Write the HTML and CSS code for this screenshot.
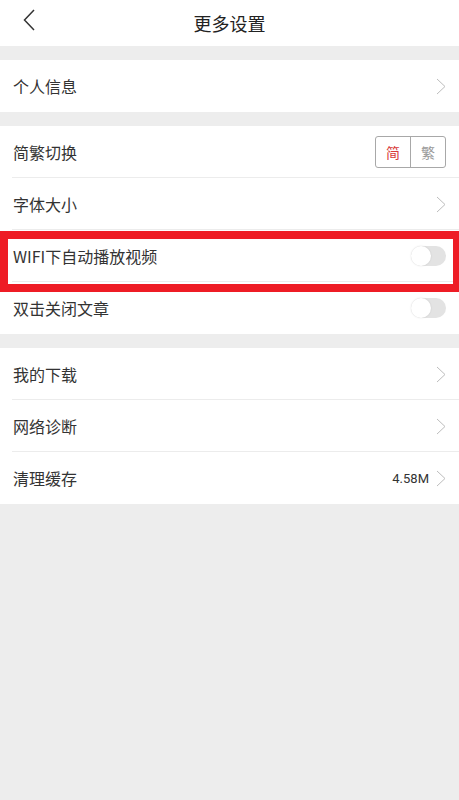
FILE: index.html
```html
<!DOCTYPE html>
<html lang="zh">
<head>
<meta charset="utf-8">
<title>更多设置</title>
<link rel="stylesheet" href="styles.css">
</head>
<body>
<div class="page">
  <header class="header">
    <span class="back">
      <svg width="14" height="22" viewBox="0 0 14 22"><polyline points="11,1 1.5,11 11,21" fill="none" stroke="#333" stroke-width="1.5"/></svg>
    </span>
    <h1 class="title">更多设置</h1>
  </header>

  <section class="group">
    <div class="row"><span class="label">个人信息</span><span class="right"><svg class="chev" width="10" height="17" viewBox="0 0 10 17"><polyline points="1,1 9,8.5 1,16" fill="none" stroke="#bdbdbd" stroke-width="1"/></svg></span></div>
  </section>

  <section class="group">
    <div class="row line"><span class="label">简繁切换</span>
      <span class="seg"><span class="seg-item active">简</span><span class="seg-item">繁</span></span>
    </div>
    <div class="row line"><span class="label">字体大小</span><span class="right"><svg class="chev" width="10" height="17" viewBox="0 0 10 17"><polyline points="1,1 9,8.5 1,16" fill="none" stroke="#bdbdbd" stroke-width="1"/></svg></span></div>
    <div class="row line"><span class="label">WIFI下自动播放视频</span><span class="toggle"><span class="knob"></span></span></div>
    <div class="row"><span class="label">双击关闭文章</span><span class="toggle"><span class="knob"></span></span></div>
  </section>

  <section class="group">
    <div class="row line"><span class="label">我的下载</span><span class="right"><svg class="chev" width="10" height="17" viewBox="0 0 10 17"><polyline points="1,1 9,8.5 1,16" fill="none" stroke="#bdbdbd" stroke-width="1"/></svg></span></div>
    <div class="row line"><span class="label">网络诊断</span><span class="right"><svg class="chev" width="10" height="17" viewBox="0 0 10 17"><polyline points="1,1 9,8.5 1,16" fill="none" stroke="#bdbdbd" stroke-width="1"/></svg></span></div>
    <div class="row"><span class="label">清理缓存</span><span class="right"><span class="value">4.58M</span><svg class="chev" width="10" height="17" viewBox="0 0 10 17"><polyline points="1,1 9,8.5 1,16" fill="none" stroke="#bdbdbd" stroke-width="1"/></svg></span></div>
  </section>

  <div class="highlight"></div>
</div>
</body>
</html>
```

FILE: styles.css
```css
html, body {
  margin: 0;
  padding: 0;
  background: #ededed;
}
body {
  font-family: "Noto Sans CJK SC", "Noto Sans", sans-serif;
  color: #333;
  width: 459px;
  height: 800px;
  overflow: hidden;
}
.page {
  position: relative;
  min-height: 800px;
}
.header {
  height: 46px;
  background: #fff;
  display: flex;
  align-items: center;
  justify-content: center;
  position: relative;
}
.back {
  position: absolute;
  left: 23px;
  top: 9px;
  display: flex;
}
.title {
  margin: 0;
  font-size: 18px;
  font-weight: 400;
  color: #222;
  line-height: 46px;
}
.group {
  margin-top: 14px;
  background: #fff;
}
.row {
  height: 52px;
  display: flex;
  align-items: center;
  justify-content: space-between;
  padding: 0 13px 0 13px;
  position: relative;
  box-sizing: border-box;
}
.row.line::after {
  content: "";
  position: absolute;
  left: 12px;
  right: 0;
  bottom: 0;
  height: 1px;
  background: #ececec;
}
.label {
  font-size: 16px;
  color: #333;
}
.right {
  display: flex;
  align-items: center;
  gap: 7px;
}
.chev {
  display: block;
}
.value {
  font-size: 13px;
  color: #333;
  font-family: "Roboto", "Noto Sans", sans-serif;
}
.seg {
  display: flex;
  border: 1px solid #a8a8a8;
  border-radius: 3px;
  height: 30px;
  width: 69px;
}
.seg-item {
  flex: 1;
  display: flex;
  align-items: center;
  justify-content: center;
  font-size: 14px;
  color: #999;
}
.seg-item.active {
  color: #d83a3a;
  border-right: 1px solid #a8a8a8;
}
.toggle {
  width: 35px;
  height: 20px;
  border-radius: 10px;
  background: #e3e3e3;
  position: relative;
  display: block;
}
.knob {
  position: absolute;
  left: 0;
  top: 0;
  width: 20px;
  height: 20px;
  border-radius: 50%;
  background: #fff;
  box-shadow: 0 0 2px rgba(0,0,0,0.12);
}
.highlight {
  position: absolute;
  left: 0;
  right: 0;
  top: 231px;
  height: 61px;
  box-sizing: border-box;
  border-style: solid;
  border-color: #ee1c25;
  border-width: 8px 6px 8px 8px;
  pointer-events: none;
}
```
